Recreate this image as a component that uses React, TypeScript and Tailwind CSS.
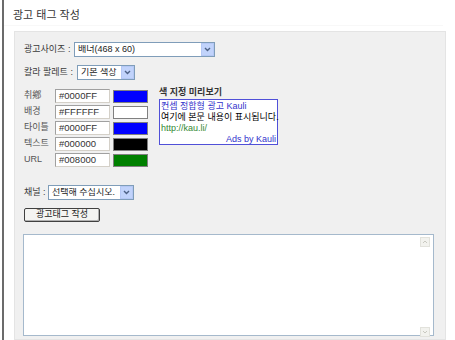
import React from "react";

const KR = "font-['Liberation_Sans','Noto_Sans_CJK_KR',sans-serif]";

// XP-style select box
const Select = ({ text, width }: { text: string; width: string }) => (
  <div
    className={`${width} h-[15px] flex items-center bg-white border border-[#7f9db9] pl-[3px] text-[9px] text-[#222]`}
  >
    <span className="flex-1 truncate leading-none">{text}</span>
    <span className="w-[13px] h-[13px] flex items-center justify-center bg-[#c1d3fb] border border-[#b5c8f5]">
      <svg width="7" height="5" viewBox="0 0 7 5">
        <path d="M1 1 L3.5 3.5 L6 1" stroke="#4d6185" strokeWidth="1.4" fill="none" />
      </svg>
    </span>
  </div>
);

const colorRows = [
  { label: "취鄕", value: "#0000FF", swatch: "bg-[#0000ff]" },
  { label: "배경", value: "#FFFFFF", swatch: "bg-white" },
  { label: "타이틀", value: "#0000FF", swatch: "bg-[#0000ff]" },
  { label: "텍스트", value: "#000000", swatch: "bg-black" },
  { label: "URL", value: "#008000", swatch: "bg-[#008000]" },
];

const App: React.FC = () => {
  return (
    <div className={`w-[455px] h-[340px] overflow-hidden bg-white ${KR}`}>
      <div className="ml-[2px] h-full border-l-2 border-[#6b6b6b] flex flex-col">
        {/* title */}
        <div className="pl-[9px] pt-[7px] h-[26px] text-[11px] text-[#333] border-b border-[#f8f8f8] mr-[12px]">
          광고 태그 작성
        </div>

        {/* panel */}
        <div className="mt-[5px] ml-[10px] w-[432px] flex-1 bg-[#f0f0f0] border border-[#e4e4e4] pl-[9px] pt-[10px] text-[#3a3a3a]">
          <div className="flex items-center gap-[2px] text-[9px]">
            <span className="w-[48px]">광고사이즈 :</span>
            <Select text="배너(468 x 60)" width="w-[141px]" />
          </div>

          <div className="flex items-center gap-[2px] text-[9px] mt-[8px]">
            <span className="w-[51px]">칼라 팔레트 :</span>
            <Select text="기본 색상" width="w-[58px]" />
          </div>

          {/* colors + preview */}
          <div className="flex mt-[9px]">
            <div className="flex flex-col gap-[2px]">
              {colorRows.map((r) => (
                <div key={r.value + r.label} className="flex items-center h-[14px]">
                  <span className="w-[31px] text-[9px] text-[#555]">{r.label}</span>
                  <div className="w-[55px] h-[14px] bg-white border border-[#d4d0c8] border-t-[#a0a0a0] border-l-[#a0a0a0] text-[9.5px] leading-[12px] pl-[3px] text-[#333]">
                    {r.value}
                  </div>
                  <div className={`ml-[3px] w-[35px] h-[13px] border border-[#808080] ${r.swatch}`} />
                </div>
              ))}
            </div>

            <div className="ml-[11px] -mt-[3px]">
              <div className="text-[9px] font-bold text-[#333] leading-[12px]">색 지정 미리보기</div>
              <div className="mt-[1px] w-[119px] h-[46px] bg-white border border-[#5050d8] text-[9px] leading-[11px] pl-[1px] pt-[1px]">
                <div className="text-[#3333cc]">컨셉 정합형 광고 Kauli</div>
                <div className="text-black whitespace-nowrap">여기에 본문 내용이 표시됩니다.</div>
                <div className="text-[#338833]">http://kau.li/</div>
                <div className="text-[#3333cc] text-right pr-[1px]">Ads by Kauli</div>
              </div>
            </div>
          </div>

          <div className="flex items-center gap-[2px] text-[9px] mt-[18px]">
            <span className="w-[22px]">채널 :</span>
            <Select text="선택해 주십시오." width="w-[86px]" />
          </div>

          <button className="mt-[6px] w-[76px] h-[14px] bg-[#f4f4f2] border border-[#404040] rounded-[2px] text-[9px] leading-none text-[#222] shadow-[inset_-1px_-1px_0_#b0b0b0]">
            광고태그 작성
          </button>

          {/* textarea */}
          <div className="mt-[10px] -ml-[1px] w-[411px] h-[102px] bg-white border border-[#a5b9cc] flex justify-end">
            <div className="w-[11px] h-full flex flex-col justify-between py-[2px] pr-[2px] box-content">
              <div className="w-[10px] h-[10px] bg-[#f2f2ee] border border-[#e2e2dc] flex items-center justify-center">
                <svg width="6" height="4" viewBox="0 0 6 4">
                  <path d="M1 3 L3 1 L5 3" stroke="#c8c8c0" strokeWidth="1" fill="none" />
                </svg>
              </div>
              <div className="w-[10px] h-[10px] bg-[#f2f2ee] border border-[#e2e2dc] flex items-center justify-center">
                <svg width="6" height="4" viewBox="0 0 6 4">
                  <path d="M1 1 L3 3 L5 1" stroke="#c8c8c0" strokeWidth="1" fill="none" />
                </svg>
              </div>
            </div>
          </div>
        </div>
      </div>
    </div>
  );
};

export default App;
